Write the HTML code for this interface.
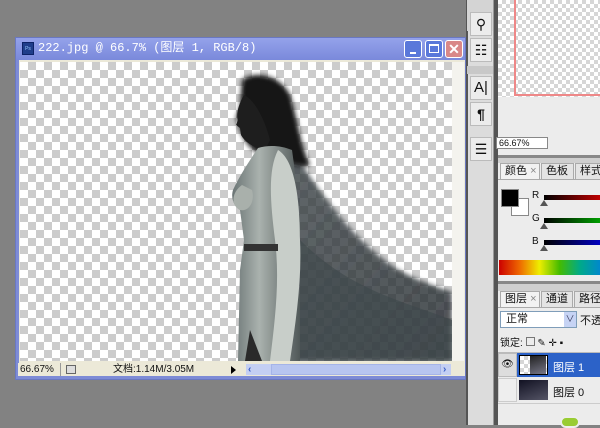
<!DOCTYPE html>
<html><head><meta charset="utf-8"><style>
*{margin:0;padding:0;box-sizing:border-box}
body{width:600px;height:425px;background:#828282;position:relative;overflow:hidden;font-family:"Liberation Sans","Noto Sans CJK SC",sans-serif;font-size:11px;color:#111}
.a{position:absolute;white-space:nowrap}
.chk{background-color:#fff;background-image:linear-gradient(45deg,#ccc 25%,transparent 25%,transparent 75%,#ccc 75%),linear-gradient(45deg,#ccc 25%,transparent 25%,transparent 75%,#ccc 75%);background-size:16px 16px;background-position:0 0,8px 8px}
.chk2{background-color:#fff;background-image:linear-gradient(45deg,#d6d6d6 25%,transparent 25%,transparent 75%,#d6d6d6 75%),linear-gradient(45deg,#d6d6d6 25%,transparent 25%,transparent 75%,#d6d6d6 75%);background-size:8px 8px;background-position:0 0,4px 4px}
.btn{width:18px;height:18px;border:1px solid #fff;border-radius:3px;top:3px}
.tool{left:470px;width:22px;height:24px;background:#ececec;border:1px solid #bbb;font-size:14px;text-align:center;line-height:22px}
.tab{height:16px;border:1px solid #aaa;border-bottom:none;background:#e4e4e4;font-size:11px;line-height:15px;padding-left:4px}
.sl{left:544px;width:60px;height:5px}
.tri{width:0;height:0;border-left:4px solid transparent;border-right:4px solid transparent;border-bottom:6px solid #555}
</style></head><body>
<div class="a" style="left:15px;top:37px;width:451px;height:343px;background:#7d8bd6;border:1px solid #6a78c0"></div>
<div class="a" style="left:16px;top:38px;width:449px;height:22px;background:linear-gradient(#94a2ea,#7a89db)"></div>
<div class="a" style="left:22px;top:42px;width:12px;height:13px;background:#1f3d8a;border:1px solid #0d2266;color:#9cf;font-size:5px;line-height:12px;text-align:center">Ps</div>
<div class="a" style="left:38px;top:41px;color:#fff;font-family:'Liberation Mono','Noto Sans CJK SC',monospace;font-size:12px;line-height:15px">222.jpg @ 66.7% (图层 1, RGB/8)</div>
<div class="a btn" style="left:404px;top:40px;background:#5a78da"><div class="a" style="left:5px;top:11px;width:6px;height:2px;background:#fff"></div></div>
<div class="a btn" style="left:425px;top:40px;background:#5a78da"><div class="a" style="left:3px;top:3px;width:10px;height:9px;border:1px solid #fff;border-top-width:2px"></div></div>
<div class="a btn" style="left:445px;top:40px;background:#d98888;color:#fff;font-size:14px;line-height:16px;text-align:center;font-weight:bold">✕</div>
<div class="a" style="left:19px;top:60px;width:446px;height:316px;background:#ece9d8"></div>
<div class="a chk" style="left:20px;top:62px;width:432px;height:299px"></div>
<svg class="a" style="left:20px;top:62px" width="432" height="299" viewBox="20 62 432 299">
<defs><filter id="b"><feGaussianBlur stdDeviation="2.5"/></filter>
<linearGradient id="cape" x1="0" y1="0" x2="1" y2="1"><stop offset="0" stop-color="#3c4448"/><stop offset="1" stop-color="#22282c"/></linearGradient>
<linearGradient id="robe" x1="0" y1="0" x2="1" y2="0"><stop offset="0" stop-color="#6a7474"/><stop offset=".4" stop-color="#aab2ae"/><stop offset="1" stop-color="#505858"/></linearGradient></defs>
<path filter="url(#b)" d="M292 148 C320 195 355 240 395 268 C420 282 440 288 452 292 L452 361 L260 361 L262 200 Z" fill="url(#cape)" opacity=".8"/>
<path d="M300 240 C350 290 400 300 452 320 L452 361 L300 361 Z" fill="#3e474b" opacity=".6"/>
<path filter="url(#b)" d="M242 80 C255 70 280 75 290 95 C298 120 300 145 310 165 C300 170 285 160 275 155 L262 155 C250 150 244 140 240 130 L236 118 L240 108 Z" fill="#151515"/>
<path d="M244 95 C238 105 236 115 238 120 L236 125 L240 128 L241 135 C245 142 252 146 258 148 L265 150 L270 140 C265 120 255 100 244 95 Z" fill="#1e1e1e"/>
<path d="M258 148 C250 160 240 175 233 190 C230 200 236 208 240 210 L244 240 L240 270 L238 361 L300 361 L300 300 C295 250 300 200 292 150 C280 145 268 145 258 148 Z" fill="url(#robe)"/>
<path d="M242 185 C232 192 230 205 240 210 C250 212 255 200 252 190 Z" fill="#a9b0ab"/>
<path d="M278 150 C295 160 300 200 300 240 C302 280 296 320 290 361 L270 361 C275 320 280 280 275 240 C270 200 268 170 278 150 Z" fill="#c8cec9"/>
<rect x="244" y="244" width="34" height="7" fill="#333"/>
<path d="M250 330 L262 361 L245 361 Z" fill="#2a2a2a"/>
</svg>
<div class="a" style="left:452px;top:62px;width:12px;height:299px;background:#f4f3ee"></div>
<div class="a" style="left:18px;top:363px;width:446px;height:13px;background:#ece9d8;font-size:10px;line-height:13px">
<span class="a" style="left:2px">66.67%</span>
<span class="a" style="left:42px;top:0;width:1px;height:13px;background:#999"></span>
<span class="a" style="left:48px;top:2px;width:10px;height:9px;border:1px solid #666;background:#ddd"></span>
<span class="a" style="left:95px">文档:1.14M/3.05M</span>
<span class="a" style="left:213px;top:3px;border-left:5px solid #000;border-top:4px solid transparent;border-bottom:4px solid transparent"></span>
<span class="a" style="left:228px;top:1px;width:205px;height:11px;background:#c4cff3"></span>
<span class="a" style="left:253px;top:1px;width:170px;height:11px;background:#b7c5f0;border:1px solid #a5b4e8"></span>
<span class="a" style="left:230px;color:#3b5fc8;font-weight:bold">‹</span>
<span class="a" style="left:425px;color:#3b5fc8;font-weight:bold">›</span>
</div>
<div class="a" style="left:466px;top:0;width:28px;height:425px;background:#dcdcdc;border-left:2px solid #555;border-right:1px solid #999"></div>
<div class="a" style="left:467px;top:0;width:26px;height:31px;background:#d4d4d4"></div>
<div class="a tool" style="top:12px">⚲</div>
<div class="a tool" style="top:38px">☷</div>
<div class="a" style="left:467px;top:66px;width:26px;height:8px;background:#c8c8c8"></div>
<div class="a tool" style="top:76px;font-size:15px">A|</div>
<div class="a tool" style="top:102px;font-weight:bold">¶</div>
<div class="a tool" style="top:137px">☰</div>
<div class="a" style="left:494px;top:0;width:4px;height:425px;background:#555"></div>
<div class="a" style="left:498px;top:0;width:102px;height:425px;background:#ececec"></div>
<div class="a chk2" style="left:498px;top:0;width:102px;height:97px"></div>
<div class="a" style="left:514px;top:-2px;width:90px;height:98px;border:2px solid #e88;border-right:none;border-top:none"></div>
<div class="a" style="left:498px;top:97px;width:102px;height:36px;background:#ececec"></div>
<div class="a" style="left:496px;top:137px;width:52px;height:12px;background:#fff;border:1px solid #888;font-size:9px;line-height:11px;padding-left:2px">66.67%</div>
<div class="a" style="left:498px;top:155px;width:102px;height:3px;background:#888"></div>
<div class="a" style="left:498px;top:158px;width:102px;height:5px;background:#cfcfcf"></div>
<div class="a tab" style="left:500px;top:163px;width:40px;background:#f2f2f2">颜色 <span style="color:#888">×</span></div>
<div class="a tab" style="left:541px;top:163px;width:33px">色板</div>
<div class="a tab" style="left:575px;top:163px;width:30px">样式</div>
<div class="a" style="left:498px;top:179px;width:102px;height:1px;background:#aaa"></div>
<div class="a" style="left:511px;top:198px;width:18px;height:18px;background:#fff;border:1px solid #888"></div>
<div class="a" style="left:501px;top:189px;width:18px;height:18px;background:#000;border:1px solid #888"></div>
<div class="a" style="left:532px;top:190px;font-size:10px">R</div>
<div class="a sl" style="top:195px;background:linear-gradient(90deg,#000,#c00)"></div>
<div class="a tri" style="left:540px;top:200px"></div>
<div class="a" style="left:532px;top:213px;font-size:10px">G</div>
<div class="a sl" style="top:218px;background:linear-gradient(90deg,#000,#0a0)"></div>
<div class="a tri" style="left:540px;top:223px"></div>
<div class="a" style="left:532px;top:236px;font-size:10px">B</div>
<div class="a sl" style="top:240px;background:linear-gradient(90deg,#000,#00c)"></div>
<div class="a tri" style="left:540px;top:245px"></div>
<div class="a" style="left:499px;top:260px;width:101px;height:15px;background:linear-gradient(90deg,#c00,#e60,#ee0,#4b0,#0a8,#08c)"></div>
<div class="a" style="left:498px;top:281px;width:102px;height:3px;background:#888"></div>
<div class="a" style="left:498px;top:284px;width:102px;height:7px;background:#cfcfcf"></div>
<div class="a tab" style="left:500px;top:291px;width:40px;background:#f2f2f2">图层 <span style="color:#888">×</span></div>
<div class="a tab" style="left:541px;top:291px;width:32px">通道</div>
<div class="a tab" style="left:574px;top:291px;width:30px">路径</div>
<div class="a" style="left:498px;top:307px;width:102px;height:1px;background:#aaa"></div>
<div class="a" style="left:500px;top:311px;width:77px;height:17px;background:#fff;border:1px solid #7f9db9;font-size:11px;line-height:15px;padding-left:5px">正常</div>
<div class="a" style="left:564px;top:312px;width:12px;height:15px;background:#c6d3f4;color:#335;font-size:9px;text-align:center;line-height:15px">∨</div>
<div class="a" style="left:580px;top:312px;font-size:11px">不透</div>
<div class="a" style="left:500px;top:334px;font-size:10px">锁定: <span style="display:inline-block;width:9px;height:9px;border:1px solid #777"></span> ✎ ✛ ▪</div>
<div class="a" style="left:498px;top:352px;width:102px;height:1px;background:#bbb"></div>
<div class="a" style="left:498px;top:353px;width:19px;height:24px;background:#ddd;border:1px solid #bbb;font-size:10px;text-align:center;line-height:22px">👁</div>
<div class="a" style="left:517px;top:353px;width:83px;height:24px;background:#2c62c8"></div>
<div class="a chk2" style="left:519px;top:355px;width:29px;height:20px;border:1px solid #000"></div>
<div class="a" style="left:530px;top:356px;width:16px;height:18px;background:linear-gradient(160deg,#222,#778)"></div>
<div class="a" style="left:553px;top:359px;color:#fff;font-size:11px">图层 1</div>
<div class="a" style="left:498px;top:378px;width:19px;height:24px;background:#eee;border:1px solid #ccc"></div>
<div class="a" style="left:519px;top:380px;width:29px;height:20px;background:linear-gradient(160deg,#112,#556)"></div>
<div class="a" style="left:553px;top:384px;font-size:11px">图层 0</div>
<div class="a" style="left:498px;top:403px;width:102px;height:1px;background:#ccc"></div>
<div class="a" style="left:560px;top:416px;width:20px;height:12px;border-radius:8px;background:#9c3;border:2px solid #eee"></div>
</body></html>
